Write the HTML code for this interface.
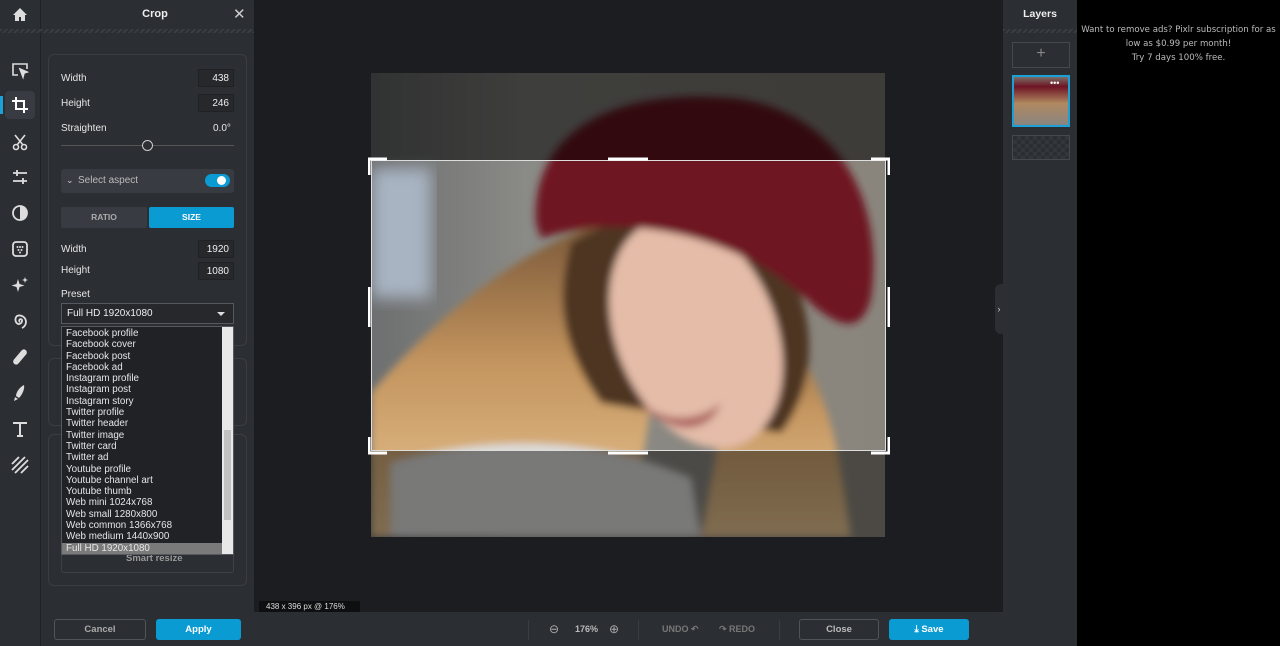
<!DOCTYPE html>
<html><head><meta charset="utf-8"><style>
*{box-sizing:border-box;margin:0;padding:0}
body{width:1280px;height:646px;overflow:hidden;background:#000;font-family:"Liberation Sans",sans-serif;position:relative;color:#ddd}
.abs{position:absolute}
#tb{left:0;top:0;width:41px;height:646px;background:#2b2e33;border-right:1px solid #202226}
#panel{left:41px;top:0;width:213px;height:646px;background:#2b2e33}
#canvas{left:254px;top:0;width:749px;height:612px;background:#1c1d20}
#bottom{left:254px;top:612px;width:823px;height:34px;background:#2b2e33}
#layers{left:1003px;top:0;width:74px;height:646px;background:#2b2e33}
.hatch{background:repeating-linear-gradient(135deg,#3a3d42 0 2px,#2b2e33 2px 4px)}
.lbl{font-size:10px;color:#e6e6e6}
.inp{position:absolute;width:36px;height:18px;border:1px solid #1f2125;background:#26282c;font-size:10px;text-align:right;padding:3px 4px;color:#eee}
.ico{position:absolute;left:10px;width:20px;height:20px}
.list div{height:11.3px;font-size:9.8px;line-height:11.3px;padding-left:4px;color:#e6e6e6}
.btn{position:absolute;height:20px;border-radius:3px;font-size:9.5px;font-weight:bold;text-align:center;line-height:20px}
</style></head><body>
<div id="tb" class="abs">
 <svg class="abs" style="left:12px;top:7px" width="16" height="15" viewBox="0 0 16 15"><path d="M8 1L1 8h2v6h4v-4h2v4h4V8h2z" fill="#ddd"/></svg>
 <div class="abs hatch" style="left:0;top:29px;width:41px;height:4px"></div>
 <svg class="ico" style="top:60px" viewBox="0 0 20 20" fill="none" stroke="#ddd" stroke-width="1.6"><path d="M8 15H3V4h14v5"/><path d="M10 9l7 3-3 1-1 4z" fill="#ddd"/></svg>
 <div class="abs" style="left:5px;top:91px;width:30px;height:28px;background:#383b41;border-radius:4px"></div>
 <div class="abs" style="left:0;top:96px;width:3px;height:18px;background:#1ba1d8"></div>
 <svg class="ico" style="top:95px" viewBox="0 0 20 20" fill="none" stroke="#fff" stroke-width="2"><path d="M6 2v12h12M2 6h12v12"/></svg>
 <svg class="ico" style="top:132px" viewBox="0 0 20 20" fill="none" stroke="#ddd" stroke-width="1.6"><circle cx="6" cy="15" r="2.5"/><circle cx="14" cy="15" r="2.5"/><path d="M7 13L15 3M13 13L5 3"/></svg>
 <svg class="ico" style="top:167px" viewBox="0 0 20 20" fill="none" stroke="#ddd" stroke-width="1.8"><path d="M3 6h14M3 14h14M7 3v6M13 11v6"/></svg>
 <svg class="ico" style="top:203px" viewBox="0 0 20 20"><circle cx="10" cy="10" r="7" fill="none" stroke="#ddd" stroke-width="1.8"/><path d="M10 3a7 7 0 0 1 0 14z" fill="#ddd"/></svg>
 <svg class="ico" style="top:239px" viewBox="0 0 20 20"><rect x="3" y="3" width="14" height="14" rx="3" fill="none" stroke="#ddd" stroke-width="1.8"/><g fill="#ddd"><circle cx="7.5" cy="8" r="1"/><circle cx="10" cy="8" r="1"/><circle cx="12.5" cy="8" r="1"/><circle cx="8.5" cy="11" r="1"/><circle cx="11.5" cy="11" r="1"/><circle cx="10" cy="13.5" r="1"/></g></svg>
 <svg class="ico" style="top:275px" viewBox="0 0 20 20" fill="#ddd"><path d="M8 4l1.5 5 5 1.5-5 1.5L8 17l-1.5-5-5-1.5 5-1.5z"/><path d="M15 2l.8 2.2 2.2.8-2.2.8L15 8l-.8-2.2L12 5l2.2-.8z"/></svg>
 <svg class="ico" style="top:311px" viewBox="0 0 20 20" fill="none" stroke="#ddd" stroke-width="1.8"><path d="M10 11a1.5 1.5 0 1 1 2-2 3.5 3.5 0 0 1-4 4 5 5 0 0 1-1-8 6.5 6.5 0 0 1 9 6 7 7 0 0 1-4 6"/></svg>
 <svg class="ico" style="top:347px" viewBox="0 0 20 20"><rect x="7" y="1" width="6" height="18" rx="3" transform="rotate(40 10 10)" fill="#ddd"/></svg>
 <svg class="ico" style="top:383px" viewBox="0 0 20 20" fill="#ddd"><path d="M14 2c-4 2-8 7-8 11l3 2c3-3 6-9 5-13zM5 14l3 2-4 2z"/></svg>
 <svg class="ico" style="top:419px" viewBox="0 0 20 20" fill="none" stroke="#ddd" stroke-width="2"><path d="M3 4h14M10 4v13M7 17h6"/></svg>
 <svg class="ico" style="top:455px" viewBox="0 0 20 20" fill="none" stroke="#ddd" stroke-width="1.8"><path d="M2 9l7-7M2 15l13-13M5 18l13-13M11 18l7-7"/></svg>
</div>
<div id="panel" class="abs">
 <div class="abs" style="left:0;top:8px;width:228px;text-align:center;font-size:11px;font-weight:bold;color:#eee">Crop</div>
 <div class="abs" style="left:192px;top:5px;font-size:15px;color:#ccc">✕</div>
 <div class="abs hatch" style="left:0;top:29px;width:213px;height:4px"></div>
 <div class="abs" style="left:7px;top:54px;width:199px;height:292px;border:1px solid #3a3d43;border-radius:6px"></div>
 <div class="abs" style="left:7px;top:358px;width:199px;height:68px;border:1px solid #3a3d43;border-radius:6px"></div>
 <div class="abs" style="left:7px;top:434px;width:199px;height:152px;border:1px solid #3a3d43;border-radius:6px"></div>
 <div class="abs lbl" style="left:20px;top:73px">Width</div><div class="inp" style="left:157px;top:69px">438</div>
 <div class="abs lbl" style="left:20px;top:98px">Height</div><div class="inp" style="left:157px;top:94px">246</div>
 <div class="abs lbl" style="left:20px;top:123px">Straighten</div><div class="abs lbl" style="left:172px;top:123px">0.0°</div>
 <div class="abs" style="left:20px;top:145px;width:173px;height:1px;background:#555"></div>
 <div class="abs" style="left:101px;top:140px;width:11px;height:11px;border-radius:50%;border:1.5px solid #ccc;background:#2b2e33"></div>
 <div class="abs" style="left:20px;top:169px;width:173px;height:24px;background:#383b41;border-radius:3px"></div>
 <div class="abs" style="left:25px;top:175px;font-size:9px;color:#ccc">⌄</div>
 <div class="abs" style="left:37px;top:175px;font-size:10px;color:#bbb">Select aspect</div>
 <div class="abs" style="left:164px;top:174px;width:25px;height:13px;border-radius:7px;background:#0a9bd3"></div>
 <div class="abs" style="left:176px;top:176px;width:9px;height:9px;border-radius:50%;background:#fff"></div>
 <div class="btn" style="left:20px;top:207px;width:86px;height:21px;background:#383b41;color:#aaa;border-radius:2px;line-height:21px;font-size:8.5px">RATIO</div>
 <div class="btn" style="left:108px;top:207px;width:85px;height:21px;background:#0a9bd3;color:#fff;border-radius:2px;line-height:21px;font-size:8.5px">SIZE</div>
 <div class="abs lbl" style="left:20px;top:244px">Width</div><div class="inp" style="left:157px;top:240px">1920</div>
 <div class="abs lbl" style="left:20px;top:265px">Height</div><div class="inp" style="left:157px;top:262px">1080</div>
 <div class="abs lbl" style="left:20px;top:289px">Preset</div>
 <div class="abs" style="left:20px;top:303px;width:173px;height:21px;border:1px solid #55585e;background:#26282c;font-size:10px;padding:4px 5px;color:#eee">Full HD 1920x1080</div>
 <div class="abs" style="left:176px;top:312px;border:4px solid transparent;border-top-color:#ddd"></div>
 <div class="abs" style="left:20px;top:535px;width:173px;height:38px;border:1px solid #3e4147;border-radius:3px"></div>
 <div class="abs" style="left:85px;top:553px;font-size:9.5px;color:#999;font-weight:bold">Smart resize</div>
 <div class="abs list" style="left:20px;top:326px;width:173px;height:229px;background:#202226;border:1px solid #55585e;padding-top:1px">
  <div>Facebook profile</div><div>Facebook cover</div><div>Facebook post</div><div>Facebook ad</div><div>Instagram profile</div><div>Instagram post</div><div>Instagram story</div><div>Twitter profile</div><div>Twitter header</div><div>Twitter image</div><div>Twitter card</div><div>Twitter ad</div><div>Youtube profile</div><div>Youtube channel art</div><div>Youtube thumb</div><div>Web mini 1024x768</div><div>Web small 1280x800</div><div>Web common 1366x768</div><div>Web medium 1440x900</div><div style="background:#7a7a7a;width:161px">Full HD 1920x1080</div>
  <div class="abs" style="right:0;top:0;width:11px;height:227px;background:#e8e8e8"></div>
  <div class="abs" style="right:2px;top:103px;width:7px;height:90px;background:#c2c2c2"></div>
 </div>
 <div class="btn" style="left:13px;top:619px;width:92px;height:21px;border:1px solid #50535a;color:#aaa;line-height:19px">Cancel</div>
 <div class="btn" style="left:115px;top:619px;width:85px;height:21px;background:#0a9bd3;color:#fff;line-height:21px">Apply</div>
</div>
<div id="canvas" class="abs">
 <svg class="abs" style="left:117px;top:73px" width="514" height="464" viewBox="0 0 514 464">
  <defs><filter id="b"><feGaussianBlur stdDeviation="8"/></filter><filter id="b2"><feGaussianBlur stdDeviation="4"/></filter>
  <linearGradient id="bg" x1="0" x2="1"><stop offset="0" stop-color="#6d6f70"/><stop offset=".3" stop-color="#8a8a86"/><stop offset="1" stop-color="#8a857c"/></linearGradient>
  <linearGradient id="hair" x1="0" y1="0" x2="0" y2="1"><stop offset="0" stop-color="#7a5838"/><stop offset=".45" stop-color="#c4955f"/><stop offset="1" stop-color="#e8c592"/></linearGradient></defs>
  <rect width="514" height="464" fill="url(#bg)"/>
  <rect x="0" y="95" width="60" height="130" fill="#a8b4c2" filter="url(#b)"/>
  <g filter="url(#b2)">
  <path d="M0 320 C60 250 140 180 230 150 L300 200 L260 464 L0 464z" fill="url(#hair)"/>
  <path d="M380 230 C430 260 460 330 470 400 L480 464 L330 464 L360 300z" fill="url(#hair)"/>
  <path d="M200 170 C260 130 360 140 420 200 C450 260 440 320 410 360 L230 330 C180 260 190 210 200 170z" fill="#4e3424"/>
  <ellipse cx="325" cy="260" rx="80" ry="120" transform="rotate(-22 325 260)" fill="#e4bca8"/>
  <path d="M265 325 C290 350 325 350 350 330 C340 360 300 368 265 325z" fill="#b06a66"/>
  <path d="M165 150 C160 60 240 15 360 25 C460 35 515 120 500 225 C490 265 465 250 445 235 C380 170 270 135 170 165z" fill="#6e1424"/>
  <path d="M20 390 C120 360 230 365 320 405 L330 464 L20 464z" fill="#dcdcda"/>
  </g>
  <rect x="0" y="0" width="514" height="87" fill="rgba(0,0,0,.55)"/>
  <rect x="0" y="378" width="514" height="86" fill="rgba(0,0,0,.45)"/>
 </svg>
 <div class="abs" style="left:117px;top:160px;width:515px;height:291px;border:1px solid #ddd"></div>
 <svg class="abs" style="left:114px;top:157px" width="522" height="298" fill="none" stroke="#fff" stroke-width="3"><path d="M1 18V2h18M503 2h18v16M1 280v16h18M503 296h18v-16M240 2h40M240 296h40M1 130v40M521 130v40"/></svg>
 <div class="abs" style="left:5px;top:601px;width:101px;height:11px;background:#0e0f10;font-size:8px;color:#ddd;padding-left:7px;line-height:11px">438 x 396 px @ 176%</div>
 <div class="abs" style="right:0;top:284px;width:8px;height:50px;background:#2b2e33;border-radius:6px 0 0 6px;font-size:9px;color:#ccc;line-height:50px;text-align:center">›</div>
</div>
<div id="bottom" class="abs">
 <div class="abs" style="left:274px;top:8px;width:1px;height:20px;background:#3a3d42"></div>
 <div class="abs" style="left:295px;top:10px;font-size:12px;color:#aaa">⊖</div>
 <div class="abs" style="left:321px;top:12px;font-size:9px;font-weight:bold;color:#bbb">176%</div>
 <div class="abs" style="left:355px;top:10px;font-size:12px;color:#aaa">⊕</div>
 <div class="abs" style="left:384px;top:8px;width:1px;height:20px;background:#3a3d42"></div>
 <div class="abs" style="left:408px;top:12px;font-size:9px;font-weight:bold;color:#777">UNDO ↶</div>
 <div class="abs" style="left:465px;top:12px;font-size:9px;font-weight:bold;color:#777">↷ REDO</div>
 <div class="abs" style="left:525px;top:8px;width:1px;height:20px;background:#3a3d42"></div>
 <div class="btn" style="left:545px;top:7px;width:80px;height:21px;border:1px solid #50535a;color:#bbb;line-height:19px">Close</div>
 <div class="btn" style="left:635px;top:7px;width:80px;height:21px;background:#0a9bd3;color:#fff;line-height:21px">⤓ Save</div>
</div>
<div id="layers" class="abs">
 <div class="abs" style="left:0;top:8px;width:74px;text-align:center;font-size:10.5px;font-weight:bold;color:#eee">Layers</div>
 <div class="abs hatch" style="left:0;top:29px;width:74px;height:4px"></div>
 <div class="abs" style="left:9px;top:42px;width:58px;height:26px;border:1px solid #45484e;text-align:center;font-size:16px;color:#888;line-height:22px">+</div>
 <div class="abs" style="left:9px;top:75px;width:58px;height:52px;border:2px solid #1ba1d8;background:linear-gradient(180deg,#7a6e66 0%,#6e1424 20%,#b08860 55%,#8a8580 100%)"></div>
 <div class="abs" style="left:47px;top:78px;font-size:9px;color:#fff">•••</div>
 <div class="abs" style="left:9px;top:135px;width:58px;height:25px;border:1px solid #45484e;background:repeating-conic-gradient(#33363b 0 25%,#2b2e33 0 50%) 0 0/8px 8px"></div>
</div>
<div class="abs" style="left:1077px;top:23px;width:203px;text-align:center;font-family:'DejaVu Sans',sans-serif;font-size:8.6px;line-height:14px;color:#bbb">Want to remove ads? Pixlr subscription for as low as $0.99 per month!<br>Try 7 days 100% free.</div>
</body></html>
